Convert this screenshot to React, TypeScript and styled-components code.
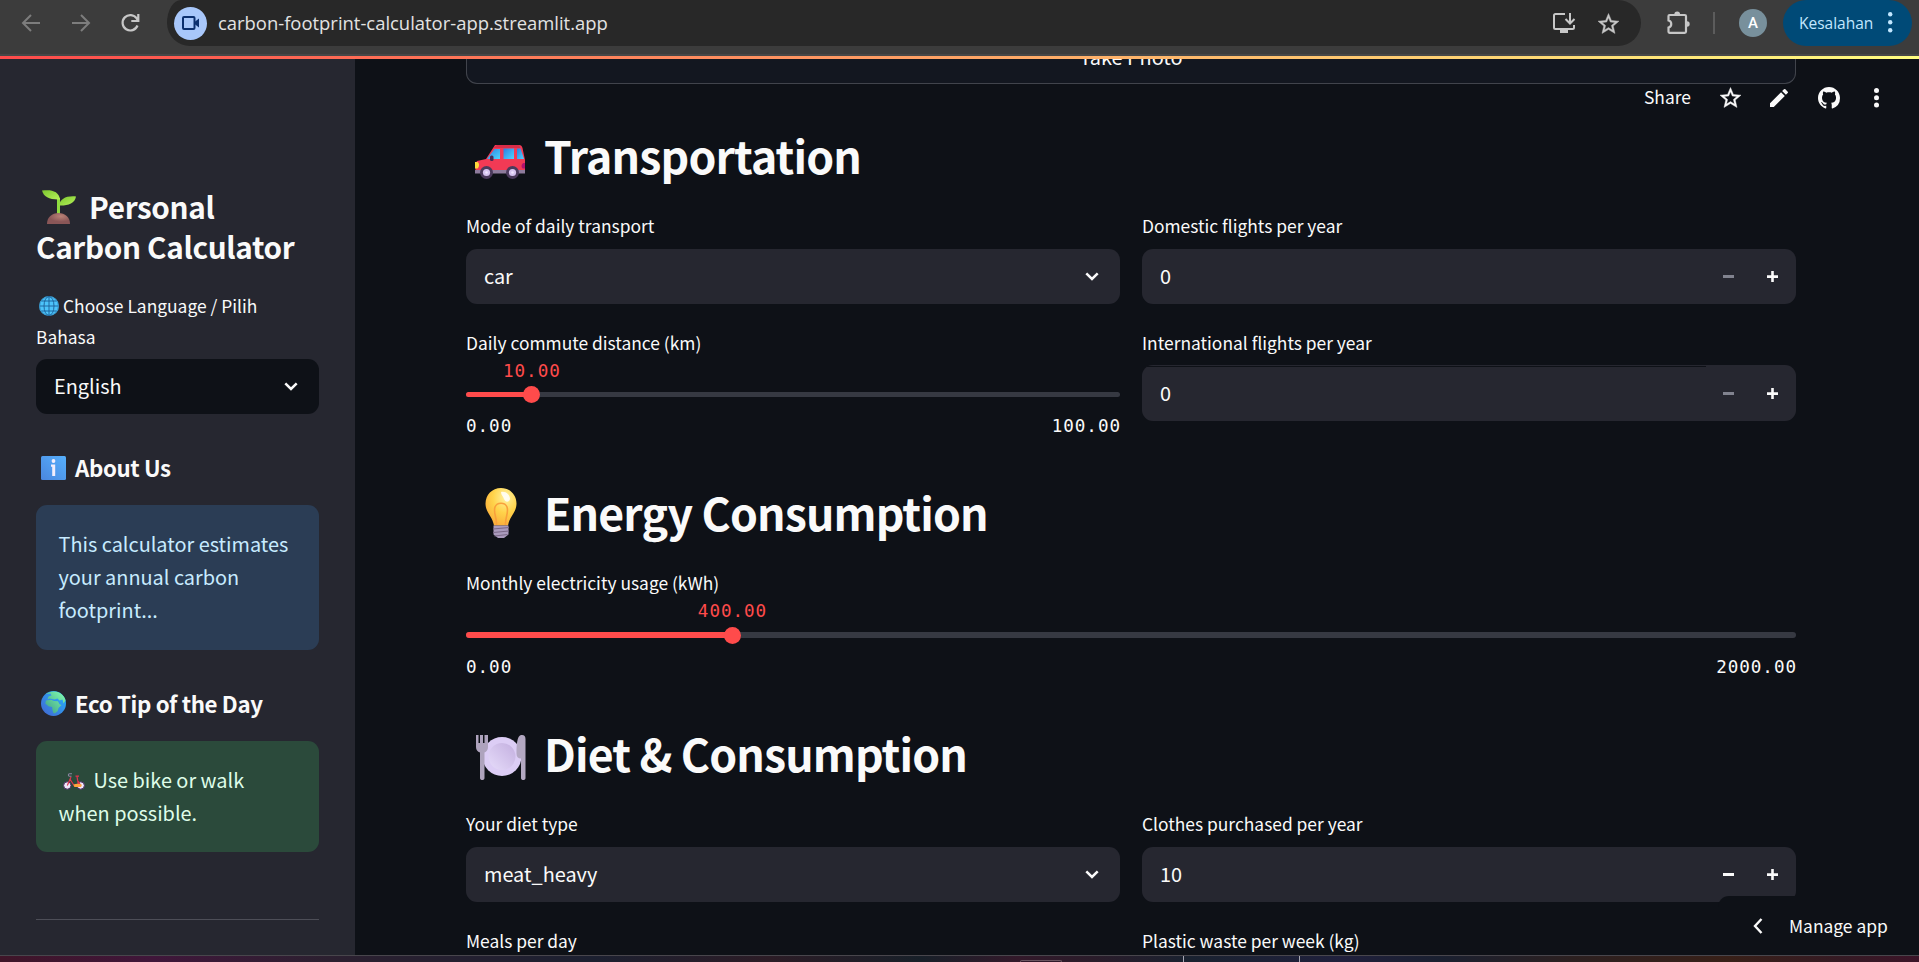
import React from "react";
import styled, { createGlobalStyle } from "styled-components";

const FONT = '"Noto Sans CJK SC", "Noto Sans", sans-serif';
const UI = '"Open Sans", "Noto Sans", sans-serif';
const MONO = '"DejaVu Sans Mono", monospace';

const Global = createGlobalStyle`
  * { box-sizing: border-box; }
  body { margin: 0; background: #0e1117; color: #fafafa; font-family: ${FONT}; overflow: hidden; }
  h1, h2, h3, p { margin: 0; }
  svg { display: block; flex: none; overflow: visible; }
`;

const Window = styled.div`
  width: 1919px; height: 962px; display: flex; flex-direction: column; overflow: hidden;
`;

/* ---------- browser bar ---------- */
const Chrome = styled.header`
  height: 56px; flex: none; display: flex; align-items: flex-start; background: #3c3c3c;
  border-bottom: 2px solid #474747; font-family: ${UI}; color: #c7c7c7;
`;
const NavButtons = styled.div`
  width: 167px; height: 46px; padding: 0 0 0 21px; display: flex; align-items: center; gap: 30px;
`;
const Address = styled.div`
  width: 1474px; height: 46px; padding: 0 21px 0 7px; display: flex; align-items: center;
  background: #282828; border-radius: 14px 23px 23px 23px / 23px;
`;
const CameraBadge = styled.span`
  width: 33px; height: 33px; border-radius: 50%; background: #a8c7fa; display: grid; place-items: center;
`;
const Url = styled.span`
  flex: 1; padding-left: 11px; font-size: 18.43px; line-height: 24px; color: #e3e3e3; white-space: nowrap;
`;
const AddressIcons = styled.div` display: flex; align-items: center; gap: 23px; margin-right: 1px; `;
const Extensions = styled.div`
  width: 142px; height: 46px; padding-left: 26px; display: flex; align-items: center;
`;
const Divider = styled.i` width: 2px; height: 22px; margin: 0 24px 0 23px; background: #5c5c5c; `;
const Avatar = styled.span`
  width: 28px; height: 28px; border-radius: 50%; background: #78909c; color: #fff;
  font: 500 15px/28px Roboto, sans-serif; text-align: center;
`;
const ErrorPill = styled.div`
  width: 129px; height: 46px; padding: 0 20px 1px 16px; display: flex; align-items: center; justify-content: space-between;
  border-radius: 23px; background: #004a77; color: #c2e7ff; font-size: 15.5px; line-height: 22px;
`;
const Rainbow = styled.div` height: 3px; flex: none; background: linear-gradient(90deg, #ff4b4b, #fffd80); `;

/* ---------- page frame ---------- */
const Body = styled.div` height: 896px; flex: none; display: flex; position: relative; overflow: hidden; `;
const Sidebar = styled.aside`
  width: 355px; flex: none; padding: 128px 36px 0; background: #262730;
`;
const Main = styled.main` width: 1441px; padding-left: 111px; `;
const Taskbar = styled.footer`
  height: 7px; flex: none; border-top: 1px solid #48464c; display: flex;
  background: linear-gradient(90deg, #3f1528 0%, #40163a 8%, #2c2030 17%, #232030 25%, #1c2030 31%, #2c1c26 40%, #182029 48%,
    #33192a 53%, #2a1c2a 57%, #1a2230 62%, #20203c 70%, #1a2030 75%, #2c2020 82%, #382018 90%, #351a24 96%, #3c1428 100%);
`;
const Tick = styled.i<{ $gap: number }>` width: 1px; height: 6px; margin-left: ${(p) => p.$gap}px; background: #a9a9b4; `;
const Tab = styled.i` width: 42px; height: 2px; margin: 4px 0 0 1020px; border: 1px solid #6a5560; border-bottom: 0; border-radius: 3px 3px 0 0; `;

/* ---------- sidebar ---------- */
const SideTitle = styled.h1`
  font-size: 29.7px; line-height: 40px; font-weight: 700; white-space: nowrap; letter-spacing: -0.34px;
  svg { display: inline-block; vertical-align: -5px; margin: 0 13px 0 6px; }
`;
const SideLabel = styled.p`
  margin-top: 23px; height: 69px; font-size: 17.4px; line-height: 31px; white-space: nowrap;
  svg { display: inline-block; vertical-align: -3px; margin: 0 4px 0 3px; }
`;
const SideHeading = styled.h3`
  margin-top: 39px; height: 30px; padding-left: 5px; display: flex; align-items: center; gap: 9px;
  font-size: 22.3px; line-height: 30px; font-weight: 700; white-space: nowrap; letter-spacing: -0.38px;
  span { margin-top: -3px; }
  svg { margin-top: -1px; }
`;
const Notice = styled.div<{ $green?: boolean }>`
  margin-top: 22px; height: ${(p) => (p.$green ? 111 : 145)}px; padding: 22px 0 0 22.5px;
  border-radius: 11px; background: ${(p) => (p.$green ? "#2b4a3b" : "#2b3d55")}; color: ${(p) => (p.$green ? "#dffde9" : "#c7ebff")};
  font-size: 19.9px; line-height: 33px; white-space: nowrap;
  svg { display: inline-block; vertical-align: -2px; margin: 0 9px 0 4px; }
`;
const Rule = styled.hr` margin: 67px 0 0; border: 0; height: 1px; background: #4d4e57; `;

/* ---------- widgets ---------- */
const PhotoButton = styled.div`
  width: 1330px; height: 25px; border: 1px solid #41444c; border-top: 0; border-radius: 0 0 11px 11px;
  background: #131720; text-align: center; font-size: 19.9px; overflow: hidden;
  span { display: block; line-height: 30px; margin-top: -17px; }
`;
const SectionTitle = styled.h2<{ $top: number }>`
  margin-top: ${(p) => p.$top}px; height: 60px; display: flex; align-items: center;
  font-size: 44.6px; line-height: 60px; font-weight: 700; white-space: nowrap; letter-spacing: -0.85px;
`;
const IconSlot = styled.span<{ $x: number; $y: number }>`
  width: 78px; height: 60px; flex: none; padding: ${(p) => p.$y}px 0 0 ${(p) => p.$x}px;
`;
const Columns = styled.div`
  width: 1330px; margin-top: 28px; display: grid; grid-template-columns: 654px 654px; column-gap: 22px;
`;
const Single = styled.div` width: 1330px; margin-top: 28px; `;
const Field = styled.div` height: 117px; `;
const Label = styled.p<{ $tight?: boolean }>`
  height: ${(p) => (p.$tight ? 31 : 36)}px; font-size: 17.4px; line-height: 26px; white-space: nowrap;
`;
const Box = styled.div<{ $dark?: boolean; $line?: boolean; $select?: boolean }>`
  height: ${(p) => (p.$line ? 56 : 55)}px; margin-top: ${(p) => (p.$line ? -1 : 0)}px; padding: 0 ${(p) => (p.$select ? 21 : 18)}px 0 18px;
  display: flex; align-items: center; border-radius: 11px;
  background: ${(p) => (p.$dark ? "#0e1117" : p.$line ? "linear-gradient(#0e1117, #0e1117) 5px 1px / 559px 1px no-repeat #262730" : "#262730")};
  font-size: 19.9px; line-height: 30px;
  span { flex: 1; margin-top: ${(p) => (p.$line ? 0 : -2)}px; }
`;
const Steps = styled.div` display: flex; gap: 33px; `;
const Slider = styled.div` font-family: ${MONO}; font-size: 17.6px; letter-spacing: 0.95px; line-height: 24px; `;
const Current = styled.div` height: 20px; color: #ff4b4b; width: 131px; text-align: center; line-height: 20px; `;
const Track = styled.div<{ $h: number }>`
  height: ${(p) => p.$h}px; margin: 11px 0 17px; border-radius: 3px; background: #363942; display: flex; align-items: center;
`;
const Filled = styled.div` height: 100%; border-radius: 3px 0 0 3px; background: #ff4b4b; `;
const Thumb = styled.div` width: 17px; height: 17px; flex: none; margin-left: -8.5px; border-radius: 50%; background: #ff4b4b; `;
const Range = styled.div` display: flex; justify-content: space-between; margin-right: -1px; `;

/* ---------- overlays ---------- */
const AppToolbar = styled.div`
  position: absolute; top: 25px; right: 0; width: 275px; height: 28px; display: flex; align-items: center;
  font-size: 17.4px; line-height: 28px;
`;
const ShareText = styled.span` width: 75.5px; margin-top: -2px; `;
const ToolIcons = styled.div`
  display: flex; align-items: center; gap: 29.8px; margin-top: -1px;
  svg:last-child { margin-left: 4px; }
`;
const Manage = styled.div`
  position: absolute; right: 0; bottom: 0; width: 201px; height: 59px; padding-left: 35px; display: flex; align-items: center;
  gap: 26px; border-radius: 11px 0 0 0; background: #0e1117; font-size: 17.4px; white-space: nowrap;
  span { margin-top: -1px; }
`;

const Chevron = () => (
  <svg width="14" height="9" viewBox="0 0 14 9"><path d="M1.3 1.3 7 7 12.7 1.3" fill="none" stroke="#fafafa" strokeWidth="2.5" /></svg>
);
const Dots = ({ r, gap, color }: { r: number; gap: number; color: string }) => (
  <svg width={r * 2} height={gap * 2 + r * 2} fill={color}>
    <circle cx={r} cy={r} r={r} /><circle cx={r} cy={r + gap} r={r} /><circle cx={r} cy={r + gap * 2} r={r} />
  </svg>
);
const StarIcon = ({ color }: { color: string }) => (
  <svg width="21" height="21" viewBox="2 2 20 19" fill={color} stroke={color} strokeWidth=".4">
    <path d="M22 9.24l-7.19-.62L12 2 9.19 8.63 2 9.24l5.46 4.73L5.82 21 12 17.27 18.18 21l-1.63-7.03L22 9.24zM12 15.4l-3.76 2.27 1-4.28-3.32-2.88 4.38-.38L12 6.1l1.71 4.04 4.38.38-3.32 2.88 1 4.28L12 15.4z" />
  </svg>
);
const PencilIcon = () => (
  <svg width="18" height="18" viewBox="3 3 18 18" fill="#fafafa">
    <path d="M3 17.25V21h3.75L17.81 9.94l-3.75-3.75L3 17.25zM20.71 7.04a1 1 0 0 0 0-1.41l-2.34-2.34a1 1 0 0 0-1.41 0l-1.83 1.83 3.75 3.75 1.83-1.83z" />
  </svg>
);
const GithubIcon = () => (
  <svg width="22" height="22" viewBox="0 0 16 16" fill="#fafafa">
    <path d="M8 0C3.58 0 0 3.58 0 8c0 3.54 2.29 6.53 5.47 7.59.4.07.55-.17.55-.38 0-.19-.01-.82-.01-1.49-2.01.37-2.53-.49-2.69-.94-.09-.23-.48-.94-.82-1.13-.28-.15-.68-.52-.01-.53.63-.01 1.08.58 1.23.82.72 1.21 1.87.87 2.33.66.07-.52.28-.87.51-1.07-1.78-.2-3.64-.89-3.64-3.95 0-.87.31-1.59.82-2.15-.08-.2-.36-1.02.08-2.12 0 0 .67-.21 2.2.82.64-.18 1.32-.27 2-.27s1.36.09 2 .27c1.53-1.04 2.2-.82 2.2-.82.44 1.1.16 1.92.08 2.12.51.56.82 1.27.82 2.15 0 3.07-1.87 3.75-3.65 3.95.29.25.54.73.54 1.48 0 1.07-.01 1.93-.01 2.2 0 .21.15.46.55.38A8.01 8.01 0 0 0 16 8c0-4.42-3.58-8-8-8z" />
  </svg>
);

const Sprout = () => (
  <svg width="34" height="34" viewBox="0 0 34 34">
    <defs>
      <linearGradient id="leaf" x1="0" y1="0" x2="1" y2="1"><stop offset="0" stopColor="#7cc62f" /><stop offset="1" stopColor="#b6f25a" /></linearGradient>
      <radialGradient id="soil" cx=".6" cy=".3"><stop offset="0" stopColor="#b98277" /><stop offset="1" stopColor="#8a5657" /></radialGradient>
    </defs>
    <path d="M15 8h3v16h-3z" fill="#8fdc40" />
    <path d="M0 .6C9-.8 17 1 18 9.5 8 10 1.5 7 0 .6Z" fill="url(#leaf)" />
    <path d="M34 6.5C33 13.5 25 16 17 15.5 18 9 24 5.6 34 6.5Z" fill="url(#leaf)" />
    <path d="M5 34C5 27 10 23 16.5 23S28 27 28 34Z" fill="url(#soil)" />
  </svg>
);
const Globe = () => (
  <svg width="20" height="20" viewBox="0 0 20 20">
    <circle cx="10" cy="10" r="10" fill="#4cc3fa" />
    <g fill="none" stroke="#1b5f96" strokeWidth=".9"><circle cx="10" cy="10" r="9.3" strokeWidth=".4" /><ellipse cx="10" cy="10" rx="5" ry="9.5" /><path d="M10 .5v19M.5 10h19M2.500 5h15M2.500 15h15" /></g>
  </svg>
);
const Info = () => (
  <svg width="25" height="24" viewBox="0 0 25 24">
    <defs><linearGradient id="inf" x1="1" y1="0" x2="0" y2="1"><stop offset="0" stopColor="#56b0fd" /><stop offset="1" stopColor="#4a86de" /></linearGradient></defs>
    <rect width="25" height="24" rx="1.5" fill="url(#inf)" />
    <circle cx="12.5" cy="5" r="1.9" fill="#f3eefc" /><path d="M10 8.500h4.200v11.500h-3v-9.200H10z" fill="#f3eefc" />
  </svg>
);
const Earth = () => (
  <svg width="25" height="25" viewBox="0 0 25 25">
    <defs>
      <linearGradient id="sea" x1="1" y1="0" x2="0" y2="1"><stop offset="0" stopColor="#23b6ff" /><stop offset="1" stopColor="#4464cf" /></linearGradient>
      <linearGradient id="land" x1="1" y1="0" x2="0" y2="1"><stop offset="0" stopColor="#84ffb0" /><stop offset="1" stopColor="#3c9c86" /></linearGradient>
    </defs>
    <circle cx="12.5" cy="12.5" r="12.5" fill="url(#sea)" />
    <path d="M5 3C9 0 14-.3 18 1.500c4 2 6 5 6.500 8l-2 3-1-4-3 1-2-2-3 1-5-1-2 1 1-3 3-1-1-2ZM5 9.500l5-.8 3 1.300 4 .3 1.500 3 2 .7-3 3-.8 3-2.700 2.300h-1.500l-1-3-.4-3.300-3.600-.8L4.300 12.500Z" fill="url(#land)" />
  </svg>
);
const Bike = () => (
  <svg width="22" height="17" viewBox="0 0 22 17">
    <g fill="#efe8fb" stroke="#4b2b62" strokeWidth="1"><circle cx="4.3" cy="12.500" r="3.7" /><circle cx="17.7" cy="12.500" r="3.7" /></g>
    <path d="M4.300 12.500 8 4M7.200 6.500l4.500 7h4L14 3.500M12.500 3.200h3.500M17.700 12.500l-3.500-6" fill="none" stroke="#e0344f" strokeWidth="1.2" />
    <path d="M9 .8H6.500c-1.500 0-1.500 2.500 0 2.500h2" fill="none" stroke="#8c86a0" strokeWidth="1.1" />
    <path d="M10.500 11.500c3-1.300 6-1 8.500.3l-1 2.200h-6.500Z" fill="#ffa53d" />
  </svg>
);
const Car = () => (
  <svg width="50" height="34" viewBox="0 0 50 34">
    <defs><linearGradient id="glass" x1="0" y1="0" x2="1" y2="1"><stop offset="0" stopColor="#2b7fe0" /><stop offset="1" stopColor="#4fd5ff" /></linearGradient></defs>
    <path d="M20 0h24c2 0 3 1 3.500 3L50 15v13H1c-1-5-1-9 1-12l9-2Z" fill="#f23a55" />
    <path d="M22 0h22l1.500 3H18.500Z" fill="#d92c48" />
    <path d="M19.500 4H25v10H12Z" fill="url(#glass)" /><path d="M28.500 3.500H39V14H28.500Z" fill="url(#glass)" /><path d="M42 3.500h3.500L49 14h-7Z" fill="url(#glass)" />
    <rect x="15" y="10.5" width="3.5" height="5.5" rx="1.5" fill="#4a2a55" />
    <path d="M0 17h2.500c2 1 2 5 0 6.500H0Z" fill="#ffd93b" /><path d="M50 18h-1.500c-2.500 1-2.500 5-.5 5.500h2Z" fill="#b3106e" />
    <path d="M0 25h50v3.500H0Z" fill="#8d7b9c" />
    {[11.5, 37.5].map((x) => <g key={x}><circle cx={x} cy="27.5" r="6.5" fill="#4b3a5c" /><circle cx={x} cy="27.5" r="3.6" fill="#d6c4f0" /><circle cx={x} cy="27.5" r="1.3" fill="#f0e6ff" /></g>)}
  </svg>
);
const Bulb = () => (
  <svg width="32" height="50" viewBox="0 0 32 50">
    <defs><radialGradient id="bulb" cx=".65" cy=".25" r=".75"><stop offset="0" stopColor="#fff2a0" /><stop offset=".55" stopColor="#ffd34a" /><stop offset="1" stopColor="#fbb13c" /></radialGradient></defs>
    <path d="M16 0C25 0 31.500 7 31.500 15.500c0 9-7 13-8.500 22H9C7.500 28.500.5 24.500.5 15.500.5 7 7 0 16 0Z" fill="url(#bulb)" />
    <path d="M11.500 37C12 29 8 25 10 19c2-5 10-5 12 0 2 6-2 10-1.500 18" fill="none" stroke="#f9a03c" strokeWidth="1.6" />
    <path d="M16 4c5-1 9 3 9 7-1 4-5 3-6 0s-3-4-3-7Z" fill="#fff" opacity=".85" />
    <path d="M8.500 37.500h15v9L19 50h-6l-4.500-3.500Z" fill="#a99abc" /><path d="M8 41l16-1.500M8 44.500l16-1.500M9.500 48l13-1.500" stroke="#7a6887" strokeWidth="1.1" />
  </svg>
);
const Plate = () => (
  <svg width="50" height="45" viewBox="0 0 50 45">
    <defs><linearGradient id="dish" x1="0" y1="1" x2="1" y2="0"><stop offset="0" stopColor="#e6dcfa" /><stop offset="1" stopColor="#c3afdf" /></linearGradient></defs>
    <circle cx="26" cy="21.5" r="19.5" fill="#dccdf5" /><circle cx="26" cy="21.5" r="13.5" fill="url(#dish)" />
    <path d="M0 0h2.500v8H4V0h3v8h1.500V0H12v12c0 3-1.500 4.500-3.500 5.500V43c0 2.700-4.500 2.700-4.500 0V17.500C1.500 16.500 0 15 0 12Z" fill="#aea3bd" />
    <path d="M45 0c3-.5 4.500 1 4.500 4v39c0 2.700-4.500 2.700-4.500 0V23.500c-3 0-4.500-1.500-4.500-5C40.500 10 41 1 45 0Z" fill="#b3a8c2" />
  </svg>
);

const Select = ({ value, dark }: { value: string; dark?: boolean }) => (
  <Box $dark={dark} $select><span>{value}</span><Chevron /></Box>
);
const NumberInput = ({ value, off, line }: { value: string; off?: boolean; line?: boolean }) => (
  <Box $line={line}>
    <span>{value}</span>
    <Steps>
      <svg width="11" height="11"><path d="M0 4h11v3H0z" fill={off ? "#81838f" : "#fafafa"} /></svg>
      <svg width="11" height="11"><path d="M0 4.300h11v2.600H0zM4.200 0h2.600v11H4.200z" fill="#fafafa" /></svg>
    </Steps>
  </Box>
);
const RangeSlider = ({ at, value, min, max, thick }: { at: number; value: string; min: string; max: string; thick: number }) => (
  <Slider>
    <Current style={{ marginLeft: at - 65 }}>{value}</Current>
    <Track $h={thick}><Filled style={{ width: at }} /><Thumb /></Track>
    <Range><span>{min}</span><span>{max}</span></Range>
  </Slider>
);

export default function App() {
  return (
    <Window>
      <Global />
      <Chrome>
        <NavButtons>
          <svg width="20" height="18" viewBox="0 0 20 18" fill="none" stroke="#7d7d7d" strokeWidth="2"><path d="M19 9H2.500M10 1 2 9l8 8" /></svg>
          <svg width="20" height="18" viewBox="0 0 20 18" fill="none" stroke="#7d7d7d" strokeWidth="2"><path d="M1 9h16.500M10 1l8 8-8 8" /></svg>
          <svg width="19" height="18" viewBox="0 0 19 18" fill="none" stroke="#c7c7c7" strokeWidth="2.2"><path d="M16.500 11.500A7.700 7.700 0 1 1 15.700 4.500L17 6.300M17.300 0v7h-7" /></svg>
        </NavButtons>
        <Address>
          <CameraBadge>
            <svg width="17" height="14" viewBox="0 0 17 14"><rect x="1" y="1" width="11.5" height="12" rx="1" fill="none" stroke="#0b2f6e" strokeWidth="2" /><path d="M12.500 6 17 2.500v9L12.500 8Z" fill="#0b2f6e" /></svg>
          </CameraBadge>
          <Url>carbon-footprint-calculator-app.streamlit.app</Url>
          <AddressIcons>
            <svg width="22" height="20" viewBox="0 0 22 20" fill="none" stroke="#c7c7c7" strokeWidth="2"><path d="M12 1H2.500Q1 1 1 2.500v12Q1 16 2.500 16h17q1.500 0 1.500-1.500V12" /><path d="M7 18.500h8" strokeWidth="3" /><path d="M17 0v10M12.500 6l4.500 4.500L21.500 6" /></svg>
            <StarIcon color="#c7c7c7" />
          </AddressIcons>
        </Address>
        <Extensions>
          <svg width="23" height="22" viewBox="0 0 23 22" fill="none" stroke="#c7c7c7" strokeWidth="2.2"><path d="M2.500 3h15.200Q19 3 19 4.300v15.200q0 1.300-1.300 1.300H2.500q-1 0-1-1v-4.300a3.600 3.600 0 0 0 0-7V4q0-1 1-1Z" /><path d="M7.300 2.500a2.900 2.900 0 0 1 5.800 0ZM20 9.300a2.700 2.700 0 0 1 0 5.400Z" fill="#c7c7c7" stroke="none" /></svg>
          <Divider />
          <Avatar>A</Avatar>
        </Extensions>
        <ErrorPill>Kesalahan<Dots r={2.2} gap={8} color="#c2e7ff" /></ErrorPill>
      </Chrome>
      <Rainbow />
      <Body>
        <Sidebar>
          <SideTitle><Sprout />Personal<br />Carbon Calculator</SideTitle>
          <SideLabel><Globe />Choose Language / Pilih<br />Bahasa</SideLabel>
          <Select value="English" dark />
          <SideHeading><Info /><span>About Us</span></SideHeading>
          <Notice>This calculator estimates<br />your annual carbon<br />footprint...</Notice>
          <SideHeading><Earth /><span>Eco Tip of the Day</span></SideHeading>
          <Notice $green><Bike />Use bike or walk<br />when possible.</Notice>
          <Rule />
        </Sidebar>
        <Main>
          <PhotoButton><span>Take Photo</span></PhotoButton>
          <SectionTitle $top={41}><IconSlot $x={9} $y={20}><Car /></IconSlot>Transportation</SectionTitle>
          <Columns>
            <Field><Label>Mode of daily transport</Label><Select value="car" /></Field>
            <Field><Label>Domestic flights per year</Label><NumberInput value="0" off /></Field>
            <Field>
              <Label $tight>Daily commute distance (km)</Label>
              <RangeSlider at={65.4} value="10.00" min="0.00" max="100.00" thick={5} />
            </Field>
            <Field><Label>International flights per year</Label><NumberInput value="0" off line /></Field>
          </Columns>
          <SectionTitle $top={35}><IconSlot $x={18.5} $y={6}><Bulb /></IconSlot>Energy Consumption</SectionTitle>
          <Single>
            <Field>
              <Label $tight>Monthly electricity usage (kWh)</Label>
              <RangeSlider at={266} value="400.00" min="0.00" max="2000.00" thick={6} />
            </Field>
          </Single>
          <SectionTitle $top={36}><IconSlot $x={9.5} $y={12}><Plate /></IconSlot>Diet &amp; Consumption</SectionTitle>
          <Columns>
            <Field><Label>Your diet type</Label><Select value="meat_heavy" /></Field>
            <Field><Label>Clothes purchased per year</Label><NumberInput value="10" /></Field>
            <Label>Meals per day</Label>
            <Label>Plastic waste per week (kg)</Label>
          </Columns>
        </Main>
        <AppToolbar>
          <ShareText>Share</ShareText>
          <ToolIcons>
            <StarIcon color="#fafafa" />
            <PencilIcon />
            <GithubIcon />
            <Dots r={2.5} gap={7.3} color="#fafafa" />
          </ToolIcons>
        </AppToolbar>
        <Manage>
          <svg width="10" height="16" viewBox="0 0 10 16"><path d="M8.500 1 2 8l6.500 7" fill="none" stroke="#fafafa" strokeWidth="2.4" /></svg>
          <span>Manage app</span>
        </Manage>
      </Body>
      <Taskbar><Tab /><Tick $gap={121} /><Tick $gap={115} /></Taskbar>
    </Window>
  );
}
